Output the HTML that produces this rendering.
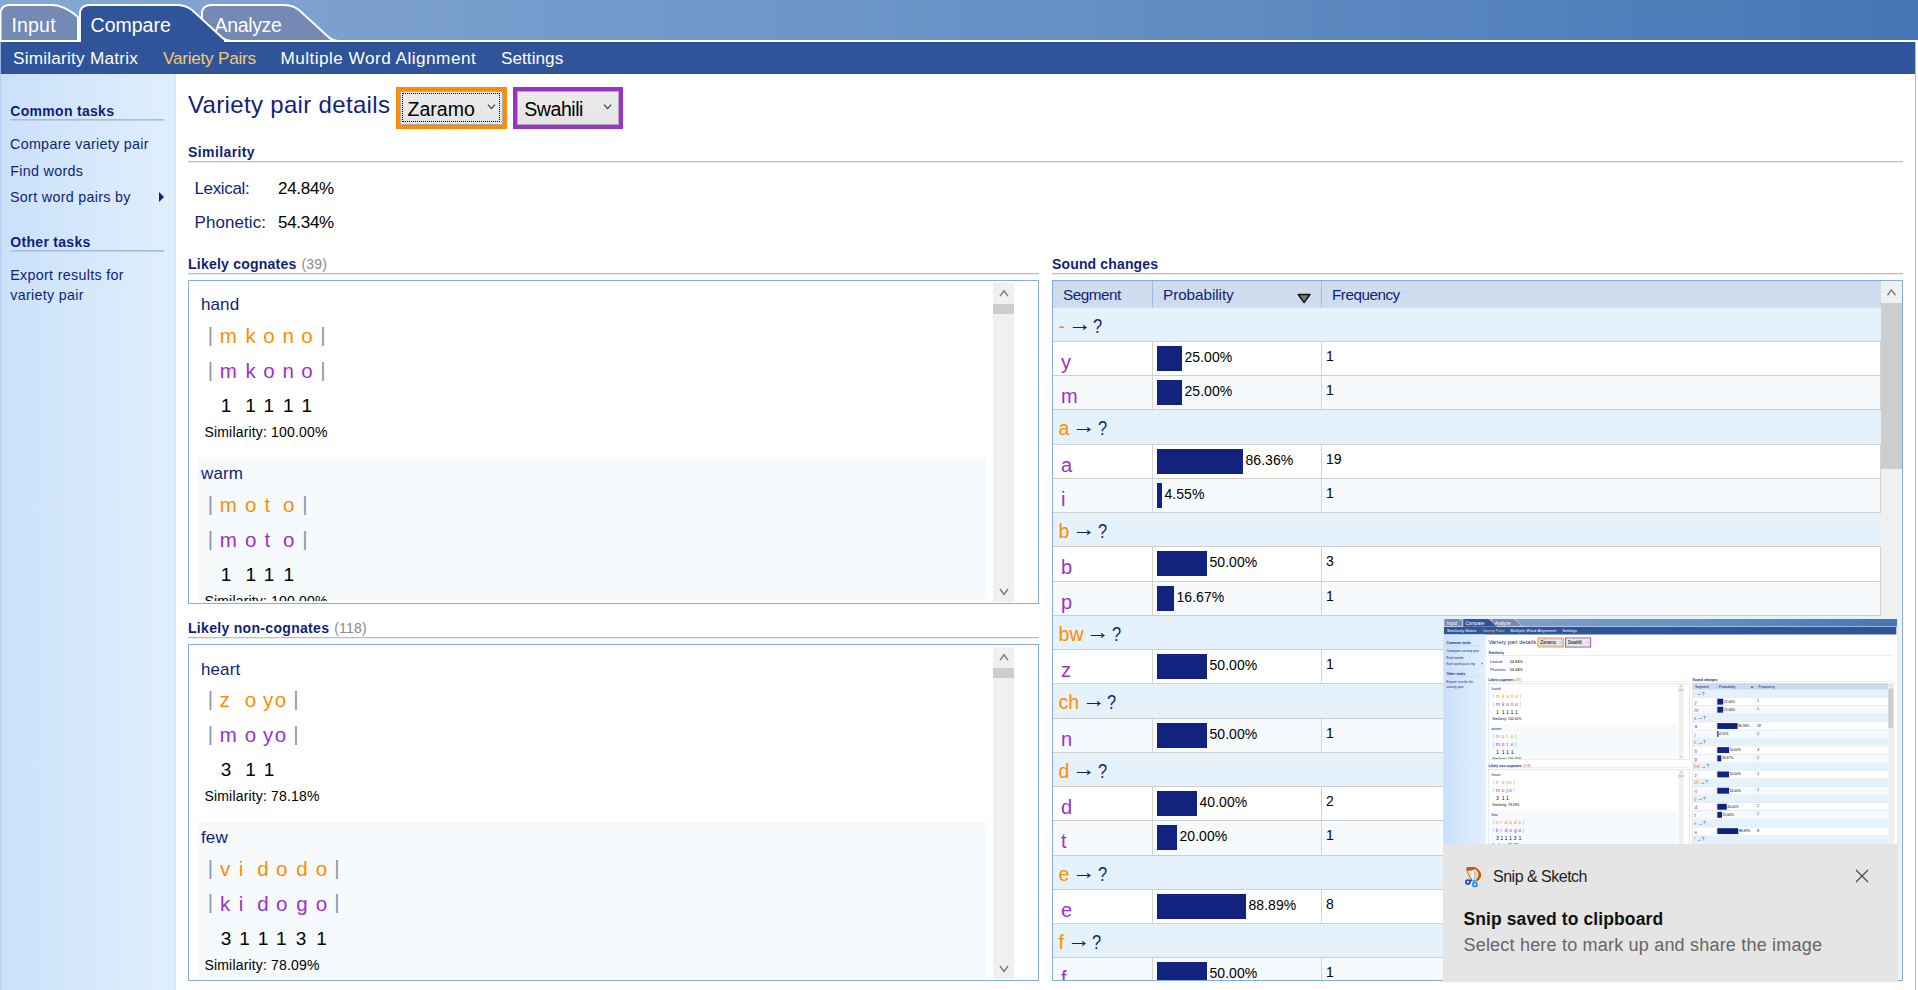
<!DOCTYPE html>
<html lang="en"><head><meta charset="utf-8"><title>Variety pair details</title>
<style>
html,body{margin:0;padding:0;background:#fff;overflow:hidden}
body{width:1918px;height:990px;position:relative;font-family:"Liberation Sans",sans-serif}
.app{position:absolute;left:0;top:0;width:1918px;height:990px;overflow:hidden;background:#fff}
.abs{position:absolute}
.t{position:absolute;white-space:pre}
.c{position:absolute;width:60px;text-align:center;white-space:pre}
.tabbar{position:absolute;left:0;top:0;width:1918px;height:42px;background:linear-gradient(90deg,#85a8d5 0%,#7a9fce 20%,#6690c5 55%,#4576b5 100%)}
.whiteline{position:absolute;left:0;top:40px;width:1918px;height:2px;background:#fff}
.menubar{position:absolute;left:0;top:42px;width:1915px;height:32px;background:#2f5499}
.sidebar{position:absolute;left:0;top:74px;width:174px;height:916px;border-right:2px solid #d3e7fc;background:linear-gradient(90deg,#c4dbf8 0px,#cbe1fa 4px,#e0effd 174px)}
.sideul{position:absolute;left:11px;width:153px;height:2px;background:linear-gradient(180deg,#9bb4e6,#c3d4f3)}
.secul{position:absolute;height:1px;background:#bdbdbd;box-shadow:0 1px 0 #ececec}
.dd{position:absolute;height:42px;box-sizing:border-box;border:4px solid}
.ddin{position:absolute;left:0;top:0;right:0;bottom:0;border:1px solid #adadad;background:linear-gradient(180deg,#ececec,#e4e4e4)}
.focus{position:absolute;left:1px;top:1px;right:2px;bottom:2px;border:1px dotted #000}
.lb{position:absolute;left:188px;width:849px;border:1px solid #86abe6;background:#fff}
.lbclip{position:absolute;left:0;top:0;width:849px;overflow:hidden}
.alt{position:absolute;left:8px;width:790px;height:169px;background:#f6fafd}
.lbtxt{position:absolute;left:0;width:990px;overflow:hidden}
.sb{position:absolute;background:#f0f0f0}
.sbthumb{position:absolute;background:#cdcdcd}
.tb{position:absolute;left:1052px;top:280px;width:849px;height:699px;border:1px solid #86abe6;background:#fff}
.th{position:absolute;left:1053px;top:281px;width:828px;height:26px;background-color:#d0ddef;background-image:radial-gradient(circle,#c9d8f0 0.6px,rgba(201,216,240,0) 1px),radial-gradient(circle,#c9d8f0 0.6px,rgba(201,216,240,0) 1px);background-size:4px 10px,4px 10px;background-position:0 1px,2px 6px}
.arr{display:inline-block;transform:translateY(-2.4px) scale(1.2,1.1);margin-left:-0.7px}
.qm{display:inline-block;transform:scaleX(0.84);transform-origin:0 50%;margin-left:-1.8px}
.tbclip{position:absolute;left:1053px;top:281px;width:828px;height:699px;overflow:hidden}
.toast{position:absolute;left:1443px;top:619px;width:455px;height:363px;background:#e5e5e5}
.thumb{position:absolute;left:1px;top:0;width:453px;height:225px;overflow:hidden;background:#fff}
.thumb .app{transform:scale(0.2362);transform-origin:0 0;top:-1.8px}
.rborder{position:absolute;left:1915px;top:42px;width:1px;height:948px;background:#a9b9e2}
.lborder{position:absolute;left:0;top:42px;width:1px;height:948px;background:#b4c8ee;opacity:.8}
</style></head>
<body>
<div class="app">
<div class="tabbar"></div>
<svg class="abs" style="left:0;top:0" width="400" height="44" viewBox="0 0 400 44">
 <!-- Input tab -->
 <path d="M0.5,41 L0.5,14 Q0.5,5 10,5 L52,5 Q64,5 78,17 L78,41 Z" fill="#7489b4" stroke="#fff" stroke-width="1.9"/>
 <!-- Analyze tab -->
 <path d="M202,41 L202,14 Q202,5 212,5 L283,5 Q293,5 299,10 L329,37.5 Q333,41 338,41 Z" fill="#7489b4" stroke="#fff" stroke-width="1.9"/>
 <!-- Compare tab (active) -->
 <path d="M80,42 L80,14 Q80,5 90,5 L176,5 Q186,5 192,10 L222,37.5 Q226,41 231,41 L231,42 Z" fill="#2f5499" stroke="#fff" stroke-width="1.9"/>
</svg>
<div class="whiteline"></div>
<div class="menubar"></div>
<div class="abs" style="left:81px;top:40px;width:143px;height:3px;background:#2f5499"></div>

<span class="t" style="left:11.40px;top:16.39px;font-size:19.5px;line-height:19.5px;color:#fff;letter-spacing:0.2px">Input</span>
<span class="t" style="left:90.60px;top:16.39px;font-size:19.5px;line-height:19.5px;color:#fff;">Compare</span>
<span class="t" style="left:214.60px;top:16.39px;font-size:19.5px;line-height:19.5px;color:#fff;letter-spacing:-0.37px">Analyze</span>
<span class="t" style="left:13.00px;top:49.54px;font-size:17.2px;line-height:17.2px;color:#fff;letter-spacing:0.22px">Similarity Matrix</span>
<span class="t" style="left:163.00px;top:49.54px;font-size:17.2px;line-height:17.2px;color:#f6c878;letter-spacing:-0.25px">Variety Pairs</span>
<span class="t" style="left:280.40px;top:49.54px;font-size:17.2px;line-height:17.2px;color:#fff;letter-spacing:0.47px">Multiple Word Alignment</span>
<span class="t" style="left:501.00px;top:49.54px;font-size:17.2px;line-height:17.2px;color:#fff;letter-spacing:0.02px">Settings</span>
<div class="sidebar"></div>
<span class="t" style="left:10.30px;top:103.85px;font-size:14px;line-height:14px;color:#111f7a;font-weight:bold;letter-spacing:0.3px">Common tasks</span>
<div class="sideul" style="top:119px"></div>
<span class="t" style="left:10.00px;top:136.50px;font-size:14.3px;line-height:14.3px;color:#111f7a;letter-spacing:0.31px">Compare variety pair</span>
<span class="t" style="left:10.20px;top:163.90px;font-size:14.3px;line-height:14.3px;color:#111f7a;letter-spacing:0.31px">Find words</span>
<span class="t" style="left:10.00px;top:189.60px;font-size:14.3px;line-height:14.3px;color:#111f7a;letter-spacing:0.31px">Sort word pairs by</span>
<svg class="abs" style="left:158px;top:191px" width="8" height="12"><path d="M1,1 L6,6 L1,11 Z" fill="#111f7a"/></svg>
<span class="t" style="left:10.30px;top:234.85px;font-size:14px;line-height:14px;color:#111f7a;font-weight:bold;letter-spacing:0.3px">Other tasks</span>
<div class="sideul" style="top:250px"></div>
<span class="t" style="left:10.20px;top:267.50px;font-size:14.3px;line-height:14.3px;color:#111f7a;letter-spacing:0.31px">Export results for</span>
<span class="t" style="left:10.20px;top:287.50px;font-size:14.3px;line-height:14.3px;color:#111f7a;letter-spacing:0.31px">variety pair</span>
<span class="t" style="left:188.00px;top:93.38px;font-size:24px;line-height:24px;color:#111f7a;letter-spacing:0.33px">Variety pair details</span>
<div class="dd" style="left:396px;top:87px;width:111px;border-color:#ff8c00"><div class="ddin"><div class="focus"></div></div></div>
<div class="dd" style="left:513px;top:87px;width:110px;border-color:#9932cc"><div class="ddin"></div></div>
<span class="t" style="left:407.60px;top:99.89px;font-size:19.5px;line-height:19.5px;color:#000;letter-spacing:0.0px">Zaramo</span>
<span class="t" style="left:524.30px;top:99.89px;font-size:19.5px;line-height:19.5px;color:#000;letter-spacing:-0.45px">Swahili</span>
<svg class="abs" style="left:0;top:0" width="1918" height="990"><polyline points="488.0,104.6 491.5,108.6 495.0,104.6" fill="none" stroke="#444" stroke-width="1.3"/></svg>
<svg class="abs" style="left:0;top:0" width="1918" height="990"><polyline points="604.1,104.6 607.6,108.6 611.1,104.6" fill="none" stroke="#444" stroke-width="1.3"/></svg>
<span class="t" style="left:188.00px;top:144.85px;font-size:14px;line-height:14px;color:#111f7a;font-weight:bold;letter-spacing:0.4px">Similarity</span><div class="secul" style="left:188px;top:161px;width:1715px"></div>
<span class="t" style="left:188.00px;top:256.95px;font-size:14px;line-height:14px;color:#111f7a;font-weight:bold;letter-spacing:0.23px">Likely cognates<span style="font-weight:normal;color:#8a8a8a;letter-spacing:0.2px;margin-left:5px">(39)</span></span><div class="secul" style="left:188px;top:273px;width:851px"></div>
<span class="t" style="left:188.00px;top:620.95px;font-size:14px;line-height:14px;color:#111f7a;font-weight:bold;letter-spacing:0.31px">Likely non-cognates<span style="font-weight:normal;color:#8a8a8a;letter-spacing:0.2px;margin-left:5px">(118)</span></span><div class="secul" style="left:188px;top:637px;width:851px"></div>
<span class="t" style="left:1052.00px;top:256.95px;font-size:14px;line-height:14px;color:#111f7a;font-weight:bold;letter-spacing:0.15px">Sound changes</span><div class="secul" style="left:1052px;top:273px;width:851px"></div>
<span class="t" style="left:194.50px;top:179.71px;font-size:17px;line-height:17px;color:#111f7a;letter-spacing:-0.35px">Lexical:</span>
<span class="t" style="left:278.00px;top:179.71px;font-size:17px;line-height:17px;color:#000;letter-spacing:-0.3px">24.84%</span>
<span class="t" style="left:194.50px;top:214.41px;font-size:17px;line-height:17px;color:#111f7a;letter-spacing:0.07px">Phonetic:</span>
<span class="t" style="left:278.00px;top:214.41px;font-size:17px;line-height:17px;color:#000;letter-spacing:-0.3px">54.34%</span>
<div class="lb" style="top:280px;height:322px">
<div class="lbclip" style="height:321px">
<div class="alt" style="top:176px"></div>
</div>
</div>
<div class="lbtxt" style="top:281px;height:320px"><div style="position:absolute;left:0;top:-281px">
<span class="t" style="left:201.00px;top:296.11px;font-size:17px;line-height:17px;color:#111f7a;letter-spacing:0.1px">hand</span>
<span class="c" style="left:180.40px;top:324.73px;font-size:20.4px;line-height:20.4px;color:#8a93b5;">|</span>
<span class="c" style="left:198.40px;top:326.05px;font-size:20.5px;line-height:20.5px;color:#ff8c00;">m</span>
<span class="c" style="left:220.50px;top:326.05px;font-size:20.5px;line-height:20.5px;color:#ff8c00;">k</span>
<span class="c" style="left:238.90px;top:326.05px;font-size:20.5px;line-height:20.5px;color:#ff8c00;">o</span>
<span class="c" style="left:258.30px;top:326.05px;font-size:20.5px;line-height:20.5px;color:#ff8c00;">n</span>
<span class="c" style="left:276.90px;top:326.05px;font-size:20.5px;line-height:20.5px;color:#ff8c00;">o</span>
<span class="c" style="left:293.00px;top:324.73px;font-size:20.4px;line-height:20.4px;color:#8a93b5;">|</span>
<span class="c" style="left:180.40px;top:359.53px;font-size:20.4px;line-height:20.4px;color:#8a93b5;">|</span>
<span class="c" style="left:198.40px;top:360.85px;font-size:20.5px;line-height:20.5px;color:#9932cc;">m</span>
<span class="c" style="left:220.50px;top:360.85px;font-size:20.5px;line-height:20.5px;color:#9932cc;">k</span>
<span class="c" style="left:238.90px;top:360.85px;font-size:20.5px;line-height:20.5px;color:#9932cc;">o</span>
<span class="c" style="left:258.30px;top:360.85px;font-size:20.5px;line-height:20.5px;color:#9932cc;">n</span>
<span class="c" style="left:276.90px;top:360.85px;font-size:20.5px;line-height:20.5px;color:#9932cc;">o</span>
<span class="c" style="left:293.00px;top:359.53px;font-size:20.4px;line-height:20.4px;color:#8a93b5;">|</span>
<span class="c" style="left:196.00px;top:395.82px;font-size:19px;line-height:19px;color:#000;">1</span>
<span class="c" style="left:220.50px;top:395.82px;font-size:19px;line-height:19px;color:#000;">1</span>
<span class="c" style="left:238.90px;top:395.82px;font-size:19px;line-height:19px;color:#000;">1</span>
<span class="c" style="left:258.30px;top:395.82px;font-size:19px;line-height:19px;color:#000;">1</span>
<span class="c" style="left:276.90px;top:395.82px;font-size:19px;line-height:19px;color:#000;">1</span>
<span class="t" style="left:204.50px;top:425.05px;font-size:14px;line-height:14px;color:#000;letter-spacing:0.17px">Similarity: 100.00%</span>
<span class="t" style="left:201.00px;top:465.11px;font-size:17px;line-height:17px;color:#111f7a;letter-spacing:0.1px">warm</span>
<span class="c" style="left:180.40px;top:493.73px;font-size:20.4px;line-height:20.4px;color:#8a93b5;">|</span>
<span class="c" style="left:198.40px;top:495.05px;font-size:20.5px;line-height:20.5px;color:#ff8c00;">m</span>
<span class="c" style="left:220.70px;top:495.05px;font-size:20.5px;line-height:20.5px;color:#ff8c00;">o</span>
<span class="c" style="left:237.40px;top:495.05px;font-size:20.5px;line-height:20.5px;color:#ff8c00;">t</span>
<span class="c" style="left:258.70px;top:495.05px;font-size:20.5px;line-height:20.5px;color:#ff8c00;">o</span>
<span class="c" style="left:274.80px;top:493.73px;font-size:20.4px;line-height:20.4px;color:#8a93b5;">|</span>
<span class="c" style="left:180.40px;top:528.53px;font-size:20.4px;line-height:20.4px;color:#8a93b5;">|</span>
<span class="c" style="left:198.40px;top:529.85px;font-size:20.5px;line-height:20.5px;color:#9932cc;">m</span>
<span class="c" style="left:220.70px;top:529.85px;font-size:20.5px;line-height:20.5px;color:#9932cc;">o</span>
<span class="c" style="left:237.40px;top:529.85px;font-size:20.5px;line-height:20.5px;color:#9932cc;">t</span>
<span class="c" style="left:258.70px;top:529.85px;font-size:20.5px;line-height:20.5px;color:#9932cc;">o</span>
<span class="c" style="left:274.80px;top:528.53px;font-size:20.4px;line-height:20.4px;color:#8a93b5;">|</span>
<span class="c" style="left:196.00px;top:564.82px;font-size:19px;line-height:19px;color:#000;">1</span>
<span class="c" style="left:220.70px;top:564.82px;font-size:19px;line-height:19px;color:#000;">1</span>
<span class="c" style="left:239.00px;top:564.82px;font-size:19px;line-height:19px;color:#000;">1</span>
<span class="c" style="left:258.70px;top:564.82px;font-size:19px;line-height:19px;color:#000;">1</span>
<span class="t" style="left:204.50px;top:594.05px;font-size:14px;line-height:14px;color:#000;letter-spacing:0.17px">Similarity: 100.00%</span>
</div></div>
<div class="sb" style="left:993px;top:283px;width:21px;height:319px"></div>
<div class="sbthumb" style="left:993px;top:304px;width:21px;height:10px"></div>
<svg class="abs" style="left:0;top:0" width="1918" height="990"><polyline points="1000.0,296.09999999999997 1004,290.7 1008.0,296.09999999999997" fill="none" stroke="#7a7f7a" stroke-width="1.5"/></svg>
<svg class="abs" style="left:0;top:0" width="1918" height="990"><polyline points="1000.0,589.0 1004,594.4000000000001 1008.0,589.0" fill="none" stroke="#7a7f7a" stroke-width="1.5"/></svg>
<div class="lb" style="top:644px;height:335px">
<div class="lbclip" style="height:332px">
<div class="alt" style="top:176.5px"></div>
</div>
</div>
<div class="lbtxt" style="top:645px;height:333px"><div style="position:absolute;left:0;top:-645px">
<span class="t" style="left:201.00px;top:660.51px;font-size:17px;line-height:17px;color:#111f7a;letter-spacing:0.1px">heart</span>
<span class="c" style="left:180.40px;top:689.13px;font-size:20.4px;line-height:20.4px;color:#8a93b5;">|</span>
<span class="c" style="left:194.50px;top:690.45px;font-size:20.5px;line-height:20.5px;color:#ff8c00;">z</span>
<span class="c" style="left:220.50px;top:690.45px;font-size:20.5px;line-height:20.5px;color:#ff8c00;">o</span>
<span class="c" style="left:238.00px;top:690.45px;font-size:20.5px;line-height:20.5px;color:#ff8c00;">y</span>
<span class="c" style="left:250.50px;top:690.45px;font-size:20.5px;line-height:20.5px;color:#ff8c00;">o</span>
<span class="c" style="left:266.00px;top:689.13px;font-size:20.4px;line-height:20.4px;color:#8a93b5;">|</span>
<span class="c" style="left:180.40px;top:723.93px;font-size:20.4px;line-height:20.4px;color:#8a93b5;">|</span>
<span class="c" style="left:198.40px;top:725.25px;font-size:20.5px;line-height:20.5px;color:#9932cc;">m</span>
<span class="c" style="left:220.50px;top:725.25px;font-size:20.5px;line-height:20.5px;color:#9932cc;">o</span>
<span class="c" style="left:238.00px;top:725.25px;font-size:20.5px;line-height:20.5px;color:#9932cc;">y</span>
<span class="c" style="left:250.50px;top:725.25px;font-size:20.5px;line-height:20.5px;color:#9932cc;">o</span>
<span class="c" style="left:266.00px;top:723.93px;font-size:20.4px;line-height:20.4px;color:#8a93b5;">|</span>
<span class="c" style="left:196.00px;top:760.22px;font-size:19px;line-height:19px;color:#000;">3</span>
<span class="c" style="left:220.50px;top:760.22px;font-size:19px;line-height:19px;color:#000;">1</span>
<span class="c" style="left:239.00px;top:760.22px;font-size:19px;line-height:19px;color:#000;">1</span>
<span class="t" style="left:204.50px;top:789.45px;font-size:14px;line-height:14px;color:#000;letter-spacing:0.17px">Similarity: 78.18%</span>
<span class="t" style="left:201.00px;top:829.01px;font-size:17px;line-height:17px;color:#111f7a;letter-spacing:0.1px">few</span>
<span class="c" style="left:180.40px;top:857.63px;font-size:20.4px;line-height:20.4px;color:#8a93b5;">|</span>
<span class="c" style="left:195.00px;top:858.95px;font-size:20.5px;line-height:20.5px;color:#ff8c00;">v</span>
<span class="c" style="left:211.00px;top:858.95px;font-size:20.5px;line-height:20.5px;color:#ff8c00;">i</span>
<span class="c" style="left:233.00px;top:858.95px;font-size:20.5px;line-height:20.5px;color:#ff8c00;">d</span>
<span class="c" style="left:251.80px;top:858.95px;font-size:20.5px;line-height:20.5px;color:#ff8c00;">o</span>
<span class="c" style="left:272.00px;top:858.95px;font-size:20.5px;line-height:20.5px;color:#ff8c00;">d</span>
<span class="c" style="left:291.50px;top:858.95px;font-size:20.5px;line-height:20.5px;color:#ff8c00;">o</span>
<span class="c" style="left:307.00px;top:857.63px;font-size:20.4px;line-height:20.4px;color:#8a93b5;">|</span>
<span class="c" style="left:180.40px;top:892.43px;font-size:20.4px;line-height:20.4px;color:#8a93b5;">|</span>
<span class="c" style="left:195.00px;top:893.75px;font-size:20.5px;line-height:20.5px;color:#9932cc;">k</span>
<span class="c" style="left:211.00px;top:893.75px;font-size:20.5px;line-height:20.5px;color:#9932cc;">i</span>
<span class="c" style="left:233.00px;top:893.75px;font-size:20.5px;line-height:20.5px;color:#9932cc;">d</span>
<span class="c" style="left:251.80px;top:893.75px;font-size:20.5px;line-height:20.5px;color:#9932cc;">o</span>
<span class="c" style="left:272.00px;top:893.75px;font-size:20.5px;line-height:20.5px;color:#9932cc;">g</span>
<span class="c" style="left:291.50px;top:893.75px;font-size:20.5px;line-height:20.5px;color:#9932cc;">o</span>
<span class="c" style="left:307.00px;top:892.43px;font-size:20.4px;line-height:20.4px;color:#8a93b5;">|</span>
<span class="c" style="left:196.00px;top:928.72px;font-size:19px;line-height:19px;color:#000;">3</span>
<span class="c" style="left:214.60px;top:928.72px;font-size:19px;line-height:19px;color:#000;">1</span>
<span class="c" style="left:233.00px;top:928.72px;font-size:19px;line-height:19px;color:#000;">1</span>
<span class="c" style="left:251.40px;top:928.72px;font-size:19px;line-height:19px;color:#000;">1</span>
<span class="c" style="left:271.00px;top:928.72px;font-size:19px;line-height:19px;color:#000;">3</span>
<span class="c" style="left:291.50px;top:928.72px;font-size:19px;line-height:19px;color:#000;">1</span>
<span class="t" style="left:204.50px;top:957.95px;font-size:14px;line-height:14px;color:#000;letter-spacing:0.17px">Similarity: 78.09%</span>
</div></div>
<div class="sb" style="left:993px;top:647px;width:21px;height:332px"></div>
<div class="sbthumb" style="left:993px;top:668px;width:21px;height:10px"></div>
<svg class="abs" style="left:0;top:0" width="1918" height="990"><polyline points="1000.0,660.1 1004,654.6999999999999 1008.0,660.1" fill="none" stroke="#7a7f7a" stroke-width="1.5"/></svg>
<svg class="abs" style="left:0;top:0" width="1918" height="990"><polyline points="1000.0,966.0 1004,971.4000000000001 1008.0,966.0" fill="none" stroke="#7a7f7a" stroke-width="1.5"/></svg>
<div class="tb"></div>
<div class="th"></div>
<div class="abs" style="left:1152px;top:281px;width:1px;height:26px;background:#9db9e6"></div>
<div class="abs" style="left:1321px;top:281px;width:1px;height:26px;background:#9db9e6"></div>
<span class="t" style="left:1063.00px;top:287.05px;font-size:15.3px;line-height:15.3px;color:#111f7a;letter-spacing:-0.5px">Segment</span>
<span class="t" style="left:1163.00px;top:287.05px;font-size:15.3px;line-height:15.3px;color:#111f7a;letter-spacing:-0.07px">Probability</span>
<span class="t" style="left:1332.00px;top:287.05px;font-size:15.3px;line-height:15.3px;color:#111f7a;letter-spacing:-0.5px">Frequency</span>
<svg class="abs" style="left:1297px;top:293px" width="15" height="11"><path d="M1.2,1.5 L13,1.5 L7.1,9.6 Z" fill="#777" stroke="#111" stroke-width="1.4" stroke-linejoin="round"/></svg>
<div class="tbclip"><div style="position:absolute;left:-1053px;top:-281px;width:1918px;height:990px">
<div class="abs" style="left:1053px;top:308px;width:828px;height:34px;background:#e5f1fb"></div>
<span class="t" style="left:1058.50px;top:316.89px;font-size:19.5px;line-height:19.5px;color:#111f7a;letter-spacing:0.1px"><span style="color:#ff8c00">-</span> <span class="arr">→</span> <span class="qm">?</span></span>
<div class="abs" style="left:1053px;top:342px;width:828px;height:33px;background:#fff"></div>
<div class="abs" style="left:1053px;top:341px;width:828px;height:1px;background:#cfcfcf"></div>
<div class="abs" style="left:1053px;top:375px;width:828px;height:1px;background:#cfcfcf"></div>
<div class="abs" style="left:1152px;top:342px;width:1px;height:33px;background:#d4d4d4"></div>
<div class="abs" style="left:1321px;top:342px;width:1px;height:33px;background:#d4d4d4"></div>
<div class="abs" style="left:1880px;top:342px;width:1px;height:33px;background:#d4d4d4"></div>
<span class="t" style="left:1061.00px;top:351.57px;font-size:20px;line-height:20px;color:#9932cc;">y</span>
<div class="abs" style="left:1157px;top:346px;width:25px;height:25px;background:#11227f"></div>
<span class="t" style="left:1184.50px;top:350.15px;font-size:14px;line-height:14px;color:#000;letter-spacing:0.05px">25.00%</span>
<span class="t" style="left:1326.00px;top:348.65px;font-size:14px;line-height:14px;color:#000;">1</span>
<div class="abs" style="left:1053px;top:376px;width:828px;height:33px;background:#f6fafd"></div>
<div class="abs" style="left:1053px;top:375px;width:828px;height:1px;background:#cfcfcf"></div>
<div class="abs" style="left:1053px;top:409px;width:828px;height:1px;background:#cfcfcf"></div>
<div class="abs" style="left:1152px;top:376px;width:1px;height:33px;background:#d4d4d4"></div>
<div class="abs" style="left:1321px;top:376px;width:1px;height:33px;background:#d4d4d4"></div>
<div class="abs" style="left:1880px;top:376px;width:1px;height:33px;background:#d4d4d4"></div>
<span class="t" style="left:1061.00px;top:385.57px;font-size:20px;line-height:20px;color:#9932cc;">m</span>
<div class="abs" style="left:1157px;top:380px;width:25px;height:25px;background:#11227f"></div>
<span class="t" style="left:1184.50px;top:384.15px;font-size:14px;line-height:14px;color:#000;letter-spacing:0.05px">25.00%</span>
<span class="t" style="left:1326.00px;top:382.65px;font-size:14px;line-height:14px;color:#000;">1</span>
<div class="abs" style="left:1053px;top:410px;width:828px;height:35px;background:#e5f1fb"></div>
<span class="t" style="left:1058.50px;top:418.89px;font-size:19.5px;line-height:19.5px;color:#111f7a;letter-spacing:0.1px"><span style="color:#ff8c00">a</span> <span class="arr">→</span> <span class="qm">?</span></span>
<div class="abs" style="left:1053px;top:445px;width:828px;height:33px;background:#fff"></div>
<div class="abs" style="left:1053px;top:444px;width:828px;height:1px;background:#cfcfcf"></div>
<div class="abs" style="left:1053px;top:478px;width:828px;height:1px;background:#cfcfcf"></div>
<div class="abs" style="left:1152px;top:445px;width:1px;height:33px;background:#d4d4d4"></div>
<div class="abs" style="left:1321px;top:445px;width:1px;height:33px;background:#d4d4d4"></div>
<div class="abs" style="left:1880px;top:445px;width:1px;height:33px;background:#d4d4d4"></div>
<span class="t" style="left:1061.00px;top:454.57px;font-size:20px;line-height:20px;color:#9932cc;">a</span>
<div class="abs" style="left:1157px;top:449px;width:86px;height:25px;background:#11227f"></div>
<span class="t" style="left:1245.50px;top:453.15px;font-size:14px;line-height:14px;color:#000;letter-spacing:0.05px">86.36%</span>
<span class="t" style="left:1326.00px;top:451.65px;font-size:14px;line-height:14px;color:#000;">19</span>
<div class="abs" style="left:1053px;top:479px;width:828px;height:33px;background:#f6fafd"></div>
<div class="abs" style="left:1053px;top:478px;width:828px;height:1px;background:#cfcfcf"></div>
<div class="abs" style="left:1053px;top:512px;width:828px;height:1px;background:#cfcfcf"></div>
<div class="abs" style="left:1152px;top:479px;width:1px;height:33px;background:#d4d4d4"></div>
<div class="abs" style="left:1321px;top:479px;width:1px;height:33px;background:#d4d4d4"></div>
<div class="abs" style="left:1880px;top:479px;width:1px;height:33px;background:#d4d4d4"></div>
<span class="t" style="left:1061.00px;top:488.57px;font-size:20px;line-height:20px;color:#9932cc;">i</span>
<div class="abs" style="left:1157px;top:483px;width:5px;height:25px;background:#11227f"></div>
<span class="t" style="left:1164.50px;top:487.15px;font-size:14px;line-height:14px;color:#000;letter-spacing:0.05px">4.55%</span>
<span class="t" style="left:1326.00px;top:485.65px;font-size:14px;line-height:14px;color:#000;">1</span>
<div class="abs" style="left:1053px;top:513px;width:828px;height:34px;background:#e5f1fb"></div>
<span class="t" style="left:1058.50px;top:521.89px;font-size:19.5px;line-height:19.5px;color:#111f7a;letter-spacing:0.1px"><span style="color:#ff8c00">b</span> <span class="arr">→</span> <span class="qm">?</span></span>
<div class="abs" style="left:1053px;top:547px;width:828px;height:34px;background:#fff"></div>
<div class="abs" style="left:1053px;top:546px;width:828px;height:1px;background:#cfcfcf"></div>
<div class="abs" style="left:1053px;top:581px;width:828px;height:1px;background:#cfcfcf"></div>
<div class="abs" style="left:1152px;top:547px;width:1px;height:34px;background:#d4d4d4"></div>
<div class="abs" style="left:1321px;top:547px;width:1px;height:34px;background:#d4d4d4"></div>
<div class="abs" style="left:1880px;top:547px;width:1px;height:34px;background:#d4d4d4"></div>
<span class="t" style="left:1061.00px;top:556.57px;font-size:20px;line-height:20px;color:#9932cc;">b</span>
<div class="abs" style="left:1157px;top:551px;width:50px;height:25px;background:#11227f"></div>
<span class="t" style="left:1209.50px;top:555.15px;font-size:14px;line-height:14px;color:#000;letter-spacing:0.05px">50.00%</span>
<span class="t" style="left:1326.00px;top:553.65px;font-size:14px;line-height:14px;color:#000;">3</span>
<div class="abs" style="left:1053px;top:582px;width:828px;height:33px;background:#f6fafd"></div>
<div class="abs" style="left:1053px;top:581px;width:828px;height:1px;background:#cfcfcf"></div>
<div class="abs" style="left:1053px;top:615px;width:828px;height:1px;background:#cfcfcf"></div>
<div class="abs" style="left:1152px;top:582px;width:1px;height:33px;background:#d4d4d4"></div>
<div class="abs" style="left:1321px;top:582px;width:1px;height:33px;background:#d4d4d4"></div>
<div class="abs" style="left:1880px;top:582px;width:1px;height:33px;background:#d4d4d4"></div>
<span class="t" style="left:1061.00px;top:591.57px;font-size:20px;line-height:20px;color:#9932cc;">p</span>
<div class="abs" style="left:1157px;top:586px;width:17px;height:25px;background:#11227f"></div>
<span class="t" style="left:1176.50px;top:590.15px;font-size:14px;line-height:14px;color:#000;letter-spacing:0.05px">16.67%</span>
<span class="t" style="left:1326.00px;top:588.65px;font-size:14px;line-height:14px;color:#000;">1</span>
<div class="abs" style="left:1053px;top:616px;width:828px;height:34px;background:#e5f1fb"></div>
<span class="t" style="left:1058.50px;top:624.89px;font-size:19.5px;line-height:19.5px;color:#111f7a;letter-spacing:0.1px"><span style="color:#ff8c00">bw</span> <span class="arr">→</span> <span class="qm">?</span></span>
<div class="abs" style="left:1053px;top:650px;width:828px;height:33px;background:#fff"></div>
<div class="abs" style="left:1053px;top:649px;width:828px;height:1px;background:#cfcfcf"></div>
<div class="abs" style="left:1053px;top:683px;width:828px;height:1px;background:#cfcfcf"></div>
<div class="abs" style="left:1152px;top:650px;width:1px;height:33px;background:#d4d4d4"></div>
<div class="abs" style="left:1321px;top:650px;width:1px;height:33px;background:#d4d4d4"></div>
<div class="abs" style="left:1880px;top:650px;width:1px;height:33px;background:#d4d4d4"></div>
<span class="t" style="left:1061.00px;top:659.57px;font-size:20px;line-height:20px;color:#9932cc;">z</span>
<div class="abs" style="left:1157px;top:654px;width:50px;height:25px;background:#11227f"></div>
<span class="t" style="left:1209.50px;top:658.15px;font-size:14px;line-height:14px;color:#000;letter-spacing:0.05px">50.00%</span>
<span class="t" style="left:1326.00px;top:656.65px;font-size:14px;line-height:14px;color:#000;">1</span>
<div class="abs" style="left:1053px;top:684px;width:828px;height:35px;background:#e5f1fb"></div>
<span class="t" style="left:1058.50px;top:692.89px;font-size:19.5px;line-height:19.5px;color:#111f7a;letter-spacing:0.1px"><span style="color:#ff8c00">ch</span> <span class="arr">→</span> <span class="qm">?</span></span>
<div class="abs" style="left:1053px;top:719px;width:828px;height:33px;background:#f6fafd"></div>
<div class="abs" style="left:1053px;top:718px;width:828px;height:1px;background:#cfcfcf"></div>
<div class="abs" style="left:1053px;top:752px;width:828px;height:1px;background:#cfcfcf"></div>
<div class="abs" style="left:1152px;top:719px;width:1px;height:33px;background:#d4d4d4"></div>
<div class="abs" style="left:1321px;top:719px;width:1px;height:33px;background:#d4d4d4"></div>
<div class="abs" style="left:1880px;top:719px;width:1px;height:33px;background:#d4d4d4"></div>
<span class="t" style="left:1061.00px;top:728.57px;font-size:20px;line-height:20px;color:#9932cc;">n</span>
<div class="abs" style="left:1157px;top:723px;width:50px;height:25px;background:#11227f"></div>
<span class="t" style="left:1209.50px;top:727.15px;font-size:14px;line-height:14px;color:#000;letter-spacing:0.05px">50.00%</span>
<span class="t" style="left:1326.00px;top:725.65px;font-size:14px;line-height:14px;color:#000;">1</span>
<div class="abs" style="left:1053px;top:753px;width:828px;height:34px;background:#e5f1fb"></div>
<span class="t" style="left:1058.50px;top:761.89px;font-size:19.5px;line-height:19.5px;color:#111f7a;letter-spacing:0.1px"><span style="color:#ff8c00">d</span> <span class="arr">→</span> <span class="qm">?</span></span>
<div class="abs" style="left:1053px;top:787px;width:828px;height:33px;background:#fff"></div>
<div class="abs" style="left:1053px;top:786px;width:828px;height:1px;background:#cfcfcf"></div>
<div class="abs" style="left:1053px;top:820px;width:828px;height:1px;background:#cfcfcf"></div>
<div class="abs" style="left:1152px;top:787px;width:1px;height:33px;background:#d4d4d4"></div>
<div class="abs" style="left:1321px;top:787px;width:1px;height:33px;background:#d4d4d4"></div>
<div class="abs" style="left:1880px;top:787px;width:1px;height:33px;background:#d4d4d4"></div>
<span class="t" style="left:1061.00px;top:796.57px;font-size:20px;line-height:20px;color:#9932cc;">d</span>
<div class="abs" style="left:1157px;top:791px;width:40px;height:25px;background:#11227f"></div>
<span class="t" style="left:1199.50px;top:795.15px;font-size:14px;line-height:14px;color:#000;letter-spacing:0.05px">40.00%</span>
<span class="t" style="left:1326.00px;top:793.65px;font-size:14px;line-height:14px;color:#000;">2</span>
<div class="abs" style="left:1053px;top:821px;width:828px;height:34px;background:#f6fafd"></div>
<div class="abs" style="left:1053px;top:820px;width:828px;height:1px;background:#cfcfcf"></div>
<div class="abs" style="left:1053px;top:855px;width:828px;height:1px;background:#cfcfcf"></div>
<div class="abs" style="left:1152px;top:821px;width:1px;height:34px;background:#d4d4d4"></div>
<div class="abs" style="left:1321px;top:821px;width:1px;height:34px;background:#d4d4d4"></div>
<div class="abs" style="left:1880px;top:821px;width:1px;height:34px;background:#d4d4d4"></div>
<span class="t" style="left:1061.00px;top:830.57px;font-size:20px;line-height:20px;color:#9932cc;">t</span>
<div class="abs" style="left:1157px;top:825px;width:20px;height:25px;background:#11227f"></div>
<span class="t" style="left:1179.50px;top:829.15px;font-size:14px;line-height:14px;color:#000;letter-spacing:0.05px">20.00%</span>
<span class="t" style="left:1326.00px;top:827.65px;font-size:14px;line-height:14px;color:#000;">1</span>
<div class="abs" style="left:1053px;top:856px;width:828px;height:34px;background:#e5f1fb"></div>
<span class="t" style="left:1058.50px;top:864.89px;font-size:19.5px;line-height:19.5px;color:#111f7a;letter-spacing:0.1px"><span style="color:#ff8c00">e</span> <span class="arr">→</span> <span class="qm">?</span></span>
<div class="abs" style="left:1053px;top:890px;width:828px;height:33px;background:#fff"></div>
<div class="abs" style="left:1053px;top:889px;width:828px;height:1px;background:#cfcfcf"></div>
<div class="abs" style="left:1053px;top:923px;width:828px;height:1px;background:#cfcfcf"></div>
<div class="abs" style="left:1152px;top:890px;width:1px;height:33px;background:#d4d4d4"></div>
<div class="abs" style="left:1321px;top:890px;width:1px;height:33px;background:#d4d4d4"></div>
<div class="abs" style="left:1880px;top:890px;width:1px;height:33px;background:#d4d4d4"></div>
<span class="t" style="left:1061.00px;top:899.57px;font-size:20px;line-height:20px;color:#9932cc;">e</span>
<div class="abs" style="left:1157px;top:894px;width:89px;height:25px;background:#11227f"></div>
<span class="t" style="left:1248.50px;top:898.15px;font-size:14px;line-height:14px;color:#000;letter-spacing:0.05px">88.89%</span>
<span class="t" style="left:1326.00px;top:896.65px;font-size:14px;line-height:14px;color:#000;">8</span>
<div class="abs" style="left:1053px;top:924px;width:828px;height:34px;background:#e5f1fb"></div>
<span class="t" style="left:1058.50px;top:932.89px;font-size:19.5px;line-height:19.5px;color:#111f7a;letter-spacing:0.1px"><span style="color:#ff8c00">f</span> <span class="arr">→</span> <span class="qm">?</span></span>
<div class="abs" style="left:1053px;top:958px;width:828px;height:34px;background:#f6fafd"></div>
<div class="abs" style="left:1053px;top:957px;width:828px;height:1px;background:#cfcfcf"></div>
<div class="abs" style="left:1053px;top:992px;width:828px;height:1px;background:#cfcfcf"></div>
<div class="abs" style="left:1152px;top:958px;width:1px;height:34px;background:#d4d4d4"></div>
<div class="abs" style="left:1321px;top:958px;width:1px;height:34px;background:#d4d4d4"></div>
<div class="abs" style="left:1880px;top:958px;width:1px;height:34px;background:#d4d4d4"></div>
<span class="t" style="left:1061.00px;top:967.57px;font-size:20px;line-height:20px;color:#9932cc;">f</span>
<div class="abs" style="left:1157px;top:962px;width:50px;height:25px;background:#11227f"></div>
<span class="t" style="left:1209.50px;top:966.15px;font-size:14px;line-height:14px;color:#000;letter-spacing:0.05px">50.00%</span>
<span class="t" style="left:1326.00px;top:964.65px;font-size:14px;line-height:14px;color:#000;">1</span>
</div></div>
<div class="abs" style="left:1053px;top:307px;width:828px;height:1px;background:#d3e0f1"></div>
<div class="sb" style="left:1881px;top:281px;width:21px;height:699px"></div>
<div class="sbthumb" style="left:1881px;top:303px;width:21px;height:166px"></div>
<svg class="abs" style="left:0;top:0" width="1918" height="990"><polyline points="1887.5,295.3 1891.5,289.90000000000003 1895.5,295.3" fill="none" stroke="#7a7f7a" stroke-width="1.5"/></svg>
<div class="rborder"></div><div class="lborder"></div>
</div>
<div class="toast">
<div class="thumb"><div class="app"><div class="tabbar"></div>
<svg class="abs" style="left:0;top:0" width="400" height="44" viewBox="0 0 400 44">
 <!-- Input tab -->
 <path d="M0.5,41 L0.5,14 Q0.5,5 10,5 L52,5 Q64,5 78,17 L78,41 Z" fill="#7489b4" stroke="#fff" stroke-width="1.9"/>
 <!-- Analyze tab -->
 <path d="M202,41 L202,14 Q202,5 212,5 L283,5 Q293,5 299,10 L329,37.5 Q333,41 338,41 Z" fill="#7489b4" stroke="#fff" stroke-width="1.9"/>
 <!-- Compare tab (active) -->
 <path d="M80,42 L80,14 Q80,5 90,5 L176,5 Q186,5 192,10 L222,37.5 Q226,41 231,41 L231,42 Z" fill="#2f5499" stroke="#fff" stroke-width="1.9"/>
</svg>
<div class="whiteline"></div>
<div class="menubar"></div>
<div class="abs" style="left:81px;top:40px;width:143px;height:3px;background:#2f5499"></div>

<span class="t" style="left:11.40px;top:16.39px;font-size:19.5px;line-height:19.5px;color:#fff;letter-spacing:0.2px">Input</span>
<span class="t" style="left:90.60px;top:16.39px;font-size:19.5px;line-height:19.5px;color:#fff;">Compare</span>
<span class="t" style="left:214.60px;top:16.39px;font-size:19.5px;line-height:19.5px;color:#fff;letter-spacing:-0.37px">Analyze</span>
<span class="t" style="left:13.00px;top:49.54px;font-size:17.2px;line-height:17.2px;color:#fff;letter-spacing:0.22px">Similarity Matrix</span>
<span class="t" style="left:163.00px;top:49.54px;font-size:17.2px;line-height:17.2px;color:#f6c878;letter-spacing:-0.25px">Variety Pairs</span>
<span class="t" style="left:280.40px;top:49.54px;font-size:17.2px;line-height:17.2px;color:#fff;letter-spacing:0.47px">Multiple Word Alignment</span>
<span class="t" style="left:501.00px;top:49.54px;font-size:17.2px;line-height:17.2px;color:#fff;letter-spacing:0.02px">Settings</span>
<div class="sidebar"></div>
<span class="t" style="left:10.30px;top:103.85px;font-size:14px;line-height:14px;color:#111f7a;font-weight:bold;letter-spacing:0.3px">Common tasks</span>
<div class="sideul" style="top:119px"></div>
<span class="t" style="left:10.00px;top:136.50px;font-size:14.3px;line-height:14.3px;color:#111f7a;letter-spacing:0.31px">Compare variety pair</span>
<span class="t" style="left:10.20px;top:163.90px;font-size:14.3px;line-height:14.3px;color:#111f7a;letter-spacing:0.31px">Find words</span>
<span class="t" style="left:10.00px;top:189.60px;font-size:14.3px;line-height:14.3px;color:#111f7a;letter-spacing:0.31px">Sort word pairs by</span>
<svg class="abs" style="left:158px;top:191px" width="8" height="12"><path d="M1,1 L6,6 L1,11 Z" fill="#111f7a"/></svg>
<span class="t" style="left:10.30px;top:234.85px;font-size:14px;line-height:14px;color:#111f7a;font-weight:bold;letter-spacing:0.3px">Other tasks</span>
<div class="sideul" style="top:250px"></div>
<span class="t" style="left:10.20px;top:267.50px;font-size:14.3px;line-height:14.3px;color:#111f7a;letter-spacing:0.31px">Export results for</span>
<span class="t" style="left:10.20px;top:287.50px;font-size:14.3px;line-height:14.3px;color:#111f7a;letter-spacing:0.31px">variety pair</span>
<span class="t" style="left:188.00px;top:93.38px;font-size:24px;line-height:24px;color:#111f7a;letter-spacing:0.33px">Variety pair details</span>
<div class="dd" style="left:396px;top:87px;width:111px;border-color:#ff8c00"><div class="ddin"><div class="focus"></div></div></div>
<div class="dd" style="left:513px;top:87px;width:110px;border-color:#9932cc"><div class="ddin"></div></div>
<span class="t" style="left:407.60px;top:99.89px;font-size:19.5px;line-height:19.5px;color:#000;letter-spacing:0.0px">Zaramo</span>
<span class="t" style="left:524.30px;top:99.89px;font-size:19.5px;line-height:19.5px;color:#000;letter-spacing:-0.45px">Swahili</span>
<svg class="abs" style="left:0;top:0" width="1918" height="990"><polyline points="488.0,104.6 491.5,108.6 495.0,104.6" fill="none" stroke="#444" stroke-width="1.3"/></svg>
<svg class="abs" style="left:0;top:0" width="1918" height="990"><polyline points="604.1,104.6 607.6,108.6 611.1,104.6" fill="none" stroke="#444" stroke-width="1.3"/></svg>
<span class="t" style="left:188.00px;top:144.85px;font-size:14px;line-height:14px;color:#111f7a;font-weight:bold;letter-spacing:0.4px">Similarity</span><div class="secul" style="left:188px;top:161px;width:1715px"></div>
<span class="t" style="left:188.00px;top:256.95px;font-size:14px;line-height:14px;color:#111f7a;font-weight:bold;letter-spacing:0.23px">Likely cognates<span style="font-weight:normal;color:#8a8a8a;letter-spacing:0.2px;margin-left:5px">(39)</span></span><div class="secul" style="left:188px;top:273px;width:851px"></div>
<span class="t" style="left:188.00px;top:620.95px;font-size:14px;line-height:14px;color:#111f7a;font-weight:bold;letter-spacing:0.31px">Likely non-cognates<span style="font-weight:normal;color:#8a8a8a;letter-spacing:0.2px;margin-left:5px">(118)</span></span><div class="secul" style="left:188px;top:637px;width:851px"></div>
<span class="t" style="left:1052.00px;top:256.95px;font-size:14px;line-height:14px;color:#111f7a;font-weight:bold;letter-spacing:0.15px">Sound changes</span><div class="secul" style="left:1052px;top:273px;width:851px"></div>
<span class="t" style="left:194.50px;top:179.71px;font-size:17px;line-height:17px;color:#111f7a;letter-spacing:-0.35px">Lexical:</span>
<span class="t" style="left:278.00px;top:179.71px;font-size:17px;line-height:17px;color:#000;letter-spacing:-0.3px">24.84%</span>
<span class="t" style="left:194.50px;top:214.41px;font-size:17px;line-height:17px;color:#111f7a;letter-spacing:0.07px">Phonetic:</span>
<span class="t" style="left:278.00px;top:214.41px;font-size:17px;line-height:17px;color:#000;letter-spacing:-0.3px">54.34%</span>
<div class="lb" style="top:280px;height:322px">
<div class="lbclip" style="height:321px">
<div class="alt" style="top:176px"></div>
</div>
</div>
<div class="lbtxt" style="top:281px;height:320px"><div style="position:absolute;left:0;top:-281px">
<span class="t" style="left:201.00px;top:296.11px;font-size:17px;line-height:17px;color:#111f7a;letter-spacing:0.1px">hand</span>
<span class="c" style="left:180.40px;top:324.73px;font-size:20.4px;line-height:20.4px;color:#8a93b5;">|</span>
<span class="c" style="left:198.40px;top:326.05px;font-size:20.5px;line-height:20.5px;color:#ff8c00;">m</span>
<span class="c" style="left:220.50px;top:326.05px;font-size:20.5px;line-height:20.5px;color:#ff8c00;">k</span>
<span class="c" style="left:238.90px;top:326.05px;font-size:20.5px;line-height:20.5px;color:#ff8c00;">o</span>
<span class="c" style="left:258.30px;top:326.05px;font-size:20.5px;line-height:20.5px;color:#ff8c00;">n</span>
<span class="c" style="left:276.90px;top:326.05px;font-size:20.5px;line-height:20.5px;color:#ff8c00;">o</span>
<span class="c" style="left:293.00px;top:324.73px;font-size:20.4px;line-height:20.4px;color:#8a93b5;">|</span>
<span class="c" style="left:180.40px;top:359.53px;font-size:20.4px;line-height:20.4px;color:#8a93b5;">|</span>
<span class="c" style="left:198.40px;top:360.85px;font-size:20.5px;line-height:20.5px;color:#9932cc;">m</span>
<span class="c" style="left:220.50px;top:360.85px;font-size:20.5px;line-height:20.5px;color:#9932cc;">k</span>
<span class="c" style="left:238.90px;top:360.85px;font-size:20.5px;line-height:20.5px;color:#9932cc;">o</span>
<span class="c" style="left:258.30px;top:360.85px;font-size:20.5px;line-height:20.5px;color:#9932cc;">n</span>
<span class="c" style="left:276.90px;top:360.85px;font-size:20.5px;line-height:20.5px;color:#9932cc;">o</span>
<span class="c" style="left:293.00px;top:359.53px;font-size:20.4px;line-height:20.4px;color:#8a93b5;">|</span>
<span class="c" style="left:196.00px;top:395.82px;font-size:19px;line-height:19px;color:#000;">1</span>
<span class="c" style="left:220.50px;top:395.82px;font-size:19px;line-height:19px;color:#000;">1</span>
<span class="c" style="left:238.90px;top:395.82px;font-size:19px;line-height:19px;color:#000;">1</span>
<span class="c" style="left:258.30px;top:395.82px;font-size:19px;line-height:19px;color:#000;">1</span>
<span class="c" style="left:276.90px;top:395.82px;font-size:19px;line-height:19px;color:#000;">1</span>
<span class="t" style="left:204.50px;top:425.05px;font-size:14px;line-height:14px;color:#000;letter-spacing:0.17px">Similarity: 100.00%</span>
<span class="t" style="left:201.00px;top:465.11px;font-size:17px;line-height:17px;color:#111f7a;letter-spacing:0.1px">warm</span>
<span class="c" style="left:180.40px;top:493.73px;font-size:20.4px;line-height:20.4px;color:#8a93b5;">|</span>
<span class="c" style="left:198.40px;top:495.05px;font-size:20.5px;line-height:20.5px;color:#ff8c00;">m</span>
<span class="c" style="left:220.70px;top:495.05px;font-size:20.5px;line-height:20.5px;color:#ff8c00;">o</span>
<span class="c" style="left:237.40px;top:495.05px;font-size:20.5px;line-height:20.5px;color:#ff8c00;">t</span>
<span class="c" style="left:258.70px;top:495.05px;font-size:20.5px;line-height:20.5px;color:#ff8c00;">o</span>
<span class="c" style="left:274.80px;top:493.73px;font-size:20.4px;line-height:20.4px;color:#8a93b5;">|</span>
<span class="c" style="left:180.40px;top:528.53px;font-size:20.4px;line-height:20.4px;color:#8a93b5;">|</span>
<span class="c" style="left:198.40px;top:529.85px;font-size:20.5px;line-height:20.5px;color:#9932cc;">m</span>
<span class="c" style="left:220.70px;top:529.85px;font-size:20.5px;line-height:20.5px;color:#9932cc;">o</span>
<span class="c" style="left:237.40px;top:529.85px;font-size:20.5px;line-height:20.5px;color:#9932cc;">t</span>
<span class="c" style="left:258.70px;top:529.85px;font-size:20.5px;line-height:20.5px;color:#9932cc;">o</span>
<span class="c" style="left:274.80px;top:528.53px;font-size:20.4px;line-height:20.4px;color:#8a93b5;">|</span>
<span class="c" style="left:196.00px;top:564.82px;font-size:19px;line-height:19px;color:#000;">1</span>
<span class="c" style="left:220.70px;top:564.82px;font-size:19px;line-height:19px;color:#000;">1</span>
<span class="c" style="left:239.00px;top:564.82px;font-size:19px;line-height:19px;color:#000;">1</span>
<span class="c" style="left:258.70px;top:564.82px;font-size:19px;line-height:19px;color:#000;">1</span>
<span class="t" style="left:204.50px;top:594.05px;font-size:14px;line-height:14px;color:#000;letter-spacing:0.17px">Similarity: 100.00%</span>
</div></div>
<div class="sb" style="left:993px;top:283px;width:21px;height:319px"></div>
<div class="sbthumb" style="left:993px;top:304px;width:21px;height:10px"></div>
<svg class="abs" style="left:0;top:0" width="1918" height="990"><polyline points="1000.0,296.09999999999997 1004,290.7 1008.0,296.09999999999997" fill="none" stroke="#7a7f7a" stroke-width="1.5"/></svg>
<svg class="abs" style="left:0;top:0" width="1918" height="990"><polyline points="1000.0,589.0 1004,594.4000000000001 1008.0,589.0" fill="none" stroke="#7a7f7a" stroke-width="1.5"/></svg>
<div class="lb" style="top:644px;height:335px">
<div class="lbclip" style="height:332px">
<div class="alt" style="top:176.5px"></div>
</div>
</div>
<div class="lbtxt" style="top:645px;height:333px"><div style="position:absolute;left:0;top:-645px">
<span class="t" style="left:201.00px;top:660.51px;font-size:17px;line-height:17px;color:#111f7a;letter-spacing:0.1px">heart</span>
<span class="c" style="left:180.40px;top:689.13px;font-size:20.4px;line-height:20.4px;color:#8a93b5;">|</span>
<span class="c" style="left:194.50px;top:690.45px;font-size:20.5px;line-height:20.5px;color:#ff8c00;">z</span>
<span class="c" style="left:220.50px;top:690.45px;font-size:20.5px;line-height:20.5px;color:#ff8c00;">o</span>
<span class="c" style="left:238.00px;top:690.45px;font-size:20.5px;line-height:20.5px;color:#ff8c00;">y</span>
<span class="c" style="left:250.50px;top:690.45px;font-size:20.5px;line-height:20.5px;color:#ff8c00;">o</span>
<span class="c" style="left:266.00px;top:689.13px;font-size:20.4px;line-height:20.4px;color:#8a93b5;">|</span>
<span class="c" style="left:180.40px;top:723.93px;font-size:20.4px;line-height:20.4px;color:#8a93b5;">|</span>
<span class="c" style="left:198.40px;top:725.25px;font-size:20.5px;line-height:20.5px;color:#9932cc;">m</span>
<span class="c" style="left:220.50px;top:725.25px;font-size:20.5px;line-height:20.5px;color:#9932cc;">o</span>
<span class="c" style="left:238.00px;top:725.25px;font-size:20.5px;line-height:20.5px;color:#9932cc;">y</span>
<span class="c" style="left:250.50px;top:725.25px;font-size:20.5px;line-height:20.5px;color:#9932cc;">o</span>
<span class="c" style="left:266.00px;top:723.93px;font-size:20.4px;line-height:20.4px;color:#8a93b5;">|</span>
<span class="c" style="left:196.00px;top:760.22px;font-size:19px;line-height:19px;color:#000;">3</span>
<span class="c" style="left:220.50px;top:760.22px;font-size:19px;line-height:19px;color:#000;">1</span>
<span class="c" style="left:239.00px;top:760.22px;font-size:19px;line-height:19px;color:#000;">1</span>
<span class="t" style="left:204.50px;top:789.45px;font-size:14px;line-height:14px;color:#000;letter-spacing:0.17px">Similarity: 78.18%</span>
<span class="t" style="left:201.00px;top:829.01px;font-size:17px;line-height:17px;color:#111f7a;letter-spacing:0.1px">few</span>
<span class="c" style="left:180.40px;top:857.63px;font-size:20.4px;line-height:20.4px;color:#8a93b5;">|</span>
<span class="c" style="left:195.00px;top:858.95px;font-size:20.5px;line-height:20.5px;color:#ff8c00;">v</span>
<span class="c" style="left:211.00px;top:858.95px;font-size:20.5px;line-height:20.5px;color:#ff8c00;">i</span>
<span class="c" style="left:233.00px;top:858.95px;font-size:20.5px;line-height:20.5px;color:#ff8c00;">d</span>
<span class="c" style="left:251.80px;top:858.95px;font-size:20.5px;line-height:20.5px;color:#ff8c00;">o</span>
<span class="c" style="left:272.00px;top:858.95px;font-size:20.5px;line-height:20.5px;color:#ff8c00;">d</span>
<span class="c" style="left:291.50px;top:858.95px;font-size:20.5px;line-height:20.5px;color:#ff8c00;">o</span>
<span class="c" style="left:307.00px;top:857.63px;font-size:20.4px;line-height:20.4px;color:#8a93b5;">|</span>
<span class="c" style="left:180.40px;top:892.43px;font-size:20.4px;line-height:20.4px;color:#8a93b5;">|</span>
<span class="c" style="left:195.00px;top:893.75px;font-size:20.5px;line-height:20.5px;color:#9932cc;">k</span>
<span class="c" style="left:211.00px;top:893.75px;font-size:20.5px;line-height:20.5px;color:#9932cc;">i</span>
<span class="c" style="left:233.00px;top:893.75px;font-size:20.5px;line-height:20.5px;color:#9932cc;">d</span>
<span class="c" style="left:251.80px;top:893.75px;font-size:20.5px;line-height:20.5px;color:#9932cc;">o</span>
<span class="c" style="left:272.00px;top:893.75px;font-size:20.5px;line-height:20.5px;color:#9932cc;">g</span>
<span class="c" style="left:291.50px;top:893.75px;font-size:20.5px;line-height:20.5px;color:#9932cc;">o</span>
<span class="c" style="left:307.00px;top:892.43px;font-size:20.4px;line-height:20.4px;color:#8a93b5;">|</span>
<span class="c" style="left:196.00px;top:928.72px;font-size:19px;line-height:19px;color:#000;">3</span>
<span class="c" style="left:214.60px;top:928.72px;font-size:19px;line-height:19px;color:#000;">1</span>
<span class="c" style="left:233.00px;top:928.72px;font-size:19px;line-height:19px;color:#000;">1</span>
<span class="c" style="left:251.40px;top:928.72px;font-size:19px;line-height:19px;color:#000;">1</span>
<span class="c" style="left:271.00px;top:928.72px;font-size:19px;line-height:19px;color:#000;">3</span>
<span class="c" style="left:291.50px;top:928.72px;font-size:19px;line-height:19px;color:#000;">1</span>
<span class="t" style="left:204.50px;top:957.95px;font-size:14px;line-height:14px;color:#000;letter-spacing:0.17px">Similarity: 78.09%</span>
</div></div>
<div class="sb" style="left:993px;top:647px;width:21px;height:332px"></div>
<div class="sbthumb" style="left:993px;top:668px;width:21px;height:10px"></div>
<svg class="abs" style="left:0;top:0" width="1918" height="990"><polyline points="1000.0,660.1 1004,654.6999999999999 1008.0,660.1" fill="none" stroke="#7a7f7a" stroke-width="1.5"/></svg>
<svg class="abs" style="left:0;top:0" width="1918" height="990"><polyline points="1000.0,966.0 1004,971.4000000000001 1008.0,966.0" fill="none" stroke="#7a7f7a" stroke-width="1.5"/></svg>
<div class="tb"></div>
<div class="th"></div>
<div class="abs" style="left:1152px;top:281px;width:1px;height:26px;background:#9db9e6"></div>
<div class="abs" style="left:1321px;top:281px;width:1px;height:26px;background:#9db9e6"></div>
<span class="t" style="left:1063.00px;top:287.05px;font-size:15.3px;line-height:15.3px;color:#111f7a;letter-spacing:-0.5px">Segment</span>
<span class="t" style="left:1163.00px;top:287.05px;font-size:15.3px;line-height:15.3px;color:#111f7a;letter-spacing:-0.07px">Probability</span>
<span class="t" style="left:1332.00px;top:287.05px;font-size:15.3px;line-height:15.3px;color:#111f7a;letter-spacing:-0.5px">Frequency</span>
<svg class="abs" style="left:1297px;top:293px" width="15" height="11"><path d="M1.2,1.5 L13,1.5 L7.1,9.6 Z" fill="#777" stroke="#111" stroke-width="1.4" stroke-linejoin="round"/></svg>
<div class="tbclip"><div style="position:absolute;left:-1053px;top:-281px;width:1918px;height:990px">
<div class="abs" style="left:1053px;top:308px;width:828px;height:34px;background:#e5f1fb"></div>
<span class="t" style="left:1058.50px;top:316.89px;font-size:19.5px;line-height:19.5px;color:#111f7a;letter-spacing:0.1px"><span style="color:#ff8c00">-</span> <span class="arr">→</span> <span class="qm">?</span></span>
<div class="abs" style="left:1053px;top:342px;width:828px;height:33px;background:#fff"></div>
<div class="abs" style="left:1053px;top:341px;width:828px;height:1px;background:#cfcfcf"></div>
<div class="abs" style="left:1053px;top:375px;width:828px;height:1px;background:#cfcfcf"></div>
<div class="abs" style="left:1152px;top:342px;width:1px;height:33px;background:#d4d4d4"></div>
<div class="abs" style="left:1321px;top:342px;width:1px;height:33px;background:#d4d4d4"></div>
<div class="abs" style="left:1880px;top:342px;width:1px;height:33px;background:#d4d4d4"></div>
<span class="t" style="left:1061.00px;top:351.57px;font-size:20px;line-height:20px;color:#9932cc;">y</span>
<div class="abs" style="left:1157px;top:346px;width:25px;height:25px;background:#11227f"></div>
<span class="t" style="left:1184.50px;top:350.15px;font-size:14px;line-height:14px;color:#000;letter-spacing:0.05px">25.00%</span>
<span class="t" style="left:1326.00px;top:348.65px;font-size:14px;line-height:14px;color:#000;">1</span>
<div class="abs" style="left:1053px;top:376px;width:828px;height:33px;background:#f6fafd"></div>
<div class="abs" style="left:1053px;top:375px;width:828px;height:1px;background:#cfcfcf"></div>
<div class="abs" style="left:1053px;top:409px;width:828px;height:1px;background:#cfcfcf"></div>
<div class="abs" style="left:1152px;top:376px;width:1px;height:33px;background:#d4d4d4"></div>
<div class="abs" style="left:1321px;top:376px;width:1px;height:33px;background:#d4d4d4"></div>
<div class="abs" style="left:1880px;top:376px;width:1px;height:33px;background:#d4d4d4"></div>
<span class="t" style="left:1061.00px;top:385.57px;font-size:20px;line-height:20px;color:#9932cc;">m</span>
<div class="abs" style="left:1157px;top:380px;width:25px;height:25px;background:#11227f"></div>
<span class="t" style="left:1184.50px;top:384.15px;font-size:14px;line-height:14px;color:#000;letter-spacing:0.05px">25.00%</span>
<span class="t" style="left:1326.00px;top:382.65px;font-size:14px;line-height:14px;color:#000;">1</span>
<div class="abs" style="left:1053px;top:410px;width:828px;height:35px;background:#e5f1fb"></div>
<span class="t" style="left:1058.50px;top:418.89px;font-size:19.5px;line-height:19.5px;color:#111f7a;letter-spacing:0.1px"><span style="color:#ff8c00">a</span> <span class="arr">→</span> <span class="qm">?</span></span>
<div class="abs" style="left:1053px;top:445px;width:828px;height:33px;background:#fff"></div>
<div class="abs" style="left:1053px;top:444px;width:828px;height:1px;background:#cfcfcf"></div>
<div class="abs" style="left:1053px;top:478px;width:828px;height:1px;background:#cfcfcf"></div>
<div class="abs" style="left:1152px;top:445px;width:1px;height:33px;background:#d4d4d4"></div>
<div class="abs" style="left:1321px;top:445px;width:1px;height:33px;background:#d4d4d4"></div>
<div class="abs" style="left:1880px;top:445px;width:1px;height:33px;background:#d4d4d4"></div>
<span class="t" style="left:1061.00px;top:454.57px;font-size:20px;line-height:20px;color:#9932cc;">a</span>
<div class="abs" style="left:1157px;top:449px;width:86px;height:25px;background:#11227f"></div>
<span class="t" style="left:1245.50px;top:453.15px;font-size:14px;line-height:14px;color:#000;letter-spacing:0.05px">86.36%</span>
<span class="t" style="left:1326.00px;top:451.65px;font-size:14px;line-height:14px;color:#000;">19</span>
<div class="abs" style="left:1053px;top:479px;width:828px;height:33px;background:#f6fafd"></div>
<div class="abs" style="left:1053px;top:478px;width:828px;height:1px;background:#cfcfcf"></div>
<div class="abs" style="left:1053px;top:512px;width:828px;height:1px;background:#cfcfcf"></div>
<div class="abs" style="left:1152px;top:479px;width:1px;height:33px;background:#d4d4d4"></div>
<div class="abs" style="left:1321px;top:479px;width:1px;height:33px;background:#d4d4d4"></div>
<div class="abs" style="left:1880px;top:479px;width:1px;height:33px;background:#d4d4d4"></div>
<span class="t" style="left:1061.00px;top:488.57px;font-size:20px;line-height:20px;color:#9932cc;">i</span>
<div class="abs" style="left:1157px;top:483px;width:5px;height:25px;background:#11227f"></div>
<span class="t" style="left:1164.50px;top:487.15px;font-size:14px;line-height:14px;color:#000;letter-spacing:0.05px">4.55%</span>
<span class="t" style="left:1326.00px;top:485.65px;font-size:14px;line-height:14px;color:#000;">1</span>
<div class="abs" style="left:1053px;top:513px;width:828px;height:34px;background:#e5f1fb"></div>
<span class="t" style="left:1058.50px;top:521.89px;font-size:19.5px;line-height:19.5px;color:#111f7a;letter-spacing:0.1px"><span style="color:#ff8c00">b</span> <span class="arr">→</span> <span class="qm">?</span></span>
<div class="abs" style="left:1053px;top:547px;width:828px;height:34px;background:#fff"></div>
<div class="abs" style="left:1053px;top:546px;width:828px;height:1px;background:#cfcfcf"></div>
<div class="abs" style="left:1053px;top:581px;width:828px;height:1px;background:#cfcfcf"></div>
<div class="abs" style="left:1152px;top:547px;width:1px;height:34px;background:#d4d4d4"></div>
<div class="abs" style="left:1321px;top:547px;width:1px;height:34px;background:#d4d4d4"></div>
<div class="abs" style="left:1880px;top:547px;width:1px;height:34px;background:#d4d4d4"></div>
<span class="t" style="left:1061.00px;top:556.57px;font-size:20px;line-height:20px;color:#9932cc;">b</span>
<div class="abs" style="left:1157px;top:551px;width:50px;height:25px;background:#11227f"></div>
<span class="t" style="left:1209.50px;top:555.15px;font-size:14px;line-height:14px;color:#000;letter-spacing:0.05px">50.00%</span>
<span class="t" style="left:1326.00px;top:553.65px;font-size:14px;line-height:14px;color:#000;">3</span>
<div class="abs" style="left:1053px;top:582px;width:828px;height:33px;background:#f6fafd"></div>
<div class="abs" style="left:1053px;top:581px;width:828px;height:1px;background:#cfcfcf"></div>
<div class="abs" style="left:1053px;top:615px;width:828px;height:1px;background:#cfcfcf"></div>
<div class="abs" style="left:1152px;top:582px;width:1px;height:33px;background:#d4d4d4"></div>
<div class="abs" style="left:1321px;top:582px;width:1px;height:33px;background:#d4d4d4"></div>
<div class="abs" style="left:1880px;top:582px;width:1px;height:33px;background:#d4d4d4"></div>
<span class="t" style="left:1061.00px;top:591.57px;font-size:20px;line-height:20px;color:#9932cc;">p</span>
<div class="abs" style="left:1157px;top:586px;width:17px;height:25px;background:#11227f"></div>
<span class="t" style="left:1176.50px;top:590.15px;font-size:14px;line-height:14px;color:#000;letter-spacing:0.05px">16.67%</span>
<span class="t" style="left:1326.00px;top:588.65px;font-size:14px;line-height:14px;color:#000;">1</span>
<div class="abs" style="left:1053px;top:616px;width:828px;height:34px;background:#e5f1fb"></div>
<span class="t" style="left:1058.50px;top:624.89px;font-size:19.5px;line-height:19.5px;color:#111f7a;letter-spacing:0.1px"><span style="color:#ff8c00">bw</span> <span class="arr">→</span> <span class="qm">?</span></span>
<div class="abs" style="left:1053px;top:650px;width:828px;height:33px;background:#fff"></div>
<div class="abs" style="left:1053px;top:649px;width:828px;height:1px;background:#cfcfcf"></div>
<div class="abs" style="left:1053px;top:683px;width:828px;height:1px;background:#cfcfcf"></div>
<div class="abs" style="left:1152px;top:650px;width:1px;height:33px;background:#d4d4d4"></div>
<div class="abs" style="left:1321px;top:650px;width:1px;height:33px;background:#d4d4d4"></div>
<div class="abs" style="left:1880px;top:650px;width:1px;height:33px;background:#d4d4d4"></div>
<span class="t" style="left:1061.00px;top:659.57px;font-size:20px;line-height:20px;color:#9932cc;">z</span>
<div class="abs" style="left:1157px;top:654px;width:50px;height:25px;background:#11227f"></div>
<span class="t" style="left:1209.50px;top:658.15px;font-size:14px;line-height:14px;color:#000;letter-spacing:0.05px">50.00%</span>
<span class="t" style="left:1326.00px;top:656.65px;font-size:14px;line-height:14px;color:#000;">1</span>
<div class="abs" style="left:1053px;top:684px;width:828px;height:35px;background:#e5f1fb"></div>
<span class="t" style="left:1058.50px;top:692.89px;font-size:19.5px;line-height:19.5px;color:#111f7a;letter-spacing:0.1px"><span style="color:#ff8c00">ch</span> <span class="arr">→</span> <span class="qm">?</span></span>
<div class="abs" style="left:1053px;top:719px;width:828px;height:33px;background:#f6fafd"></div>
<div class="abs" style="left:1053px;top:718px;width:828px;height:1px;background:#cfcfcf"></div>
<div class="abs" style="left:1053px;top:752px;width:828px;height:1px;background:#cfcfcf"></div>
<div class="abs" style="left:1152px;top:719px;width:1px;height:33px;background:#d4d4d4"></div>
<div class="abs" style="left:1321px;top:719px;width:1px;height:33px;background:#d4d4d4"></div>
<div class="abs" style="left:1880px;top:719px;width:1px;height:33px;background:#d4d4d4"></div>
<span class="t" style="left:1061.00px;top:728.57px;font-size:20px;line-height:20px;color:#9932cc;">n</span>
<div class="abs" style="left:1157px;top:723px;width:50px;height:25px;background:#11227f"></div>
<span class="t" style="left:1209.50px;top:727.15px;font-size:14px;line-height:14px;color:#000;letter-spacing:0.05px">50.00%</span>
<span class="t" style="left:1326.00px;top:725.65px;font-size:14px;line-height:14px;color:#000;">1</span>
<div class="abs" style="left:1053px;top:753px;width:828px;height:34px;background:#e5f1fb"></div>
<span class="t" style="left:1058.50px;top:761.89px;font-size:19.5px;line-height:19.5px;color:#111f7a;letter-spacing:0.1px"><span style="color:#ff8c00">d</span> <span class="arr">→</span> <span class="qm">?</span></span>
<div class="abs" style="left:1053px;top:787px;width:828px;height:33px;background:#fff"></div>
<div class="abs" style="left:1053px;top:786px;width:828px;height:1px;background:#cfcfcf"></div>
<div class="abs" style="left:1053px;top:820px;width:828px;height:1px;background:#cfcfcf"></div>
<div class="abs" style="left:1152px;top:787px;width:1px;height:33px;background:#d4d4d4"></div>
<div class="abs" style="left:1321px;top:787px;width:1px;height:33px;background:#d4d4d4"></div>
<div class="abs" style="left:1880px;top:787px;width:1px;height:33px;background:#d4d4d4"></div>
<span class="t" style="left:1061.00px;top:796.57px;font-size:20px;line-height:20px;color:#9932cc;">d</span>
<div class="abs" style="left:1157px;top:791px;width:40px;height:25px;background:#11227f"></div>
<span class="t" style="left:1199.50px;top:795.15px;font-size:14px;line-height:14px;color:#000;letter-spacing:0.05px">40.00%</span>
<span class="t" style="left:1326.00px;top:793.65px;font-size:14px;line-height:14px;color:#000;">2</span>
<div class="abs" style="left:1053px;top:821px;width:828px;height:34px;background:#f6fafd"></div>
<div class="abs" style="left:1053px;top:820px;width:828px;height:1px;background:#cfcfcf"></div>
<div class="abs" style="left:1053px;top:855px;width:828px;height:1px;background:#cfcfcf"></div>
<div class="abs" style="left:1152px;top:821px;width:1px;height:34px;background:#d4d4d4"></div>
<div class="abs" style="left:1321px;top:821px;width:1px;height:34px;background:#d4d4d4"></div>
<div class="abs" style="left:1880px;top:821px;width:1px;height:34px;background:#d4d4d4"></div>
<span class="t" style="left:1061.00px;top:830.57px;font-size:20px;line-height:20px;color:#9932cc;">t</span>
<div class="abs" style="left:1157px;top:825px;width:20px;height:25px;background:#11227f"></div>
<span class="t" style="left:1179.50px;top:829.15px;font-size:14px;line-height:14px;color:#000;letter-spacing:0.05px">20.00%</span>
<span class="t" style="left:1326.00px;top:827.65px;font-size:14px;line-height:14px;color:#000;">1</span>
<div class="abs" style="left:1053px;top:856px;width:828px;height:34px;background:#e5f1fb"></div>
<span class="t" style="left:1058.50px;top:864.89px;font-size:19.5px;line-height:19.5px;color:#111f7a;letter-spacing:0.1px"><span style="color:#ff8c00">e</span> <span class="arr">→</span> <span class="qm">?</span></span>
<div class="abs" style="left:1053px;top:890px;width:828px;height:33px;background:#fff"></div>
<div class="abs" style="left:1053px;top:889px;width:828px;height:1px;background:#cfcfcf"></div>
<div class="abs" style="left:1053px;top:923px;width:828px;height:1px;background:#cfcfcf"></div>
<div class="abs" style="left:1152px;top:890px;width:1px;height:33px;background:#d4d4d4"></div>
<div class="abs" style="left:1321px;top:890px;width:1px;height:33px;background:#d4d4d4"></div>
<div class="abs" style="left:1880px;top:890px;width:1px;height:33px;background:#d4d4d4"></div>
<span class="t" style="left:1061.00px;top:899.57px;font-size:20px;line-height:20px;color:#9932cc;">e</span>
<div class="abs" style="left:1157px;top:894px;width:89px;height:25px;background:#11227f"></div>
<span class="t" style="left:1248.50px;top:898.15px;font-size:14px;line-height:14px;color:#000;letter-spacing:0.05px">88.89%</span>
<span class="t" style="left:1326.00px;top:896.65px;font-size:14px;line-height:14px;color:#000;">8</span>
<div class="abs" style="left:1053px;top:924px;width:828px;height:34px;background:#e5f1fb"></div>
<span class="t" style="left:1058.50px;top:932.89px;font-size:19.5px;line-height:19.5px;color:#111f7a;letter-spacing:0.1px"><span style="color:#ff8c00">f</span> <span class="arr">→</span> <span class="qm">?</span></span>
<div class="abs" style="left:1053px;top:958px;width:828px;height:34px;background:#f6fafd"></div>
<div class="abs" style="left:1053px;top:957px;width:828px;height:1px;background:#cfcfcf"></div>
<div class="abs" style="left:1053px;top:992px;width:828px;height:1px;background:#cfcfcf"></div>
<div class="abs" style="left:1152px;top:958px;width:1px;height:34px;background:#d4d4d4"></div>
<div class="abs" style="left:1321px;top:958px;width:1px;height:34px;background:#d4d4d4"></div>
<div class="abs" style="left:1880px;top:958px;width:1px;height:34px;background:#d4d4d4"></div>
<span class="t" style="left:1061.00px;top:967.57px;font-size:20px;line-height:20px;color:#9932cc;">f</span>
<div class="abs" style="left:1157px;top:962px;width:50px;height:25px;background:#11227f"></div>
<span class="t" style="left:1209.50px;top:966.15px;font-size:14px;line-height:14px;color:#000;letter-spacing:0.05px">50.00%</span>
<span class="t" style="left:1326.00px;top:964.65px;font-size:14px;line-height:14px;color:#000;">1</span>
</div></div>
<div class="abs" style="left:1053px;top:307px;width:828px;height:1px;background:#d3e0f1"></div>
<div class="sb" style="left:1881px;top:281px;width:21px;height:699px"></div>
<div class="sbthumb" style="left:1881px;top:303px;width:21px;height:166px"></div>
<svg class="abs" style="left:0;top:0" width="1918" height="990"><polyline points="1887.5,295.3 1891.5,289.90000000000003 1895.5,295.3" fill="none" stroke="#7a7f7a" stroke-width="1.5"/></svg></div></div>
<svg class="abs" style="left:20px;top:245px" width="24" height="26" viewBox="0 0 24 26">
 <path fill="#bf5b0c" d="M3,5 Q3.4,3 5,2.9 L11.6,3 Q16,4.5 18,9.5 Q18.8,14 14,17.6 L12.4,16.4 Q15.6,13.5 15.4,9.8 Q14.8,6.6 12,5 L9.5,6.5 L3.6,6.8 Z"/>
 <path d="M4.2,7.4 L8.3,15.8" stroke="#bf5b0c" stroke-width="1.3" stroke-dasharray="1.6 0.7" fill="none"/>
 <path d="M9.3,6.5 L10.9,5.5 L10.9,16 L9.6,16 Z" fill="#fafafa"/>
 <path d="M10.9,5 L11.8,5 L13.8,10.5 L12,16 L10.9,16 Z" fill="#c6c6c6"/>
 <path d="M6.6,16.8 L9.3,15.8" stroke="#0b4ec0" stroke-width="1.8"/>
 <path d="M10.9,16 L11.6,18.4" stroke="#2a8ff0" stroke-width="1.8"/>
 <circle cx="4.9" cy="18" r="2.0" fill="none" stroke="#0b4ec0" stroke-width="1.7"/>
 <circle cx="11.9" cy="20.4" r="2.0" fill="none" stroke="#2a8ff0" stroke-width="1.7"/>
</svg>
<span class="t" style="left:50px;top:249.66px;font-size:16px;line-height:16px;color:#1f1f1f;letter-spacing:-0.5px">Snip &amp; Sketch</span>
<svg class="abs" style="left:412px;top:250px" width="14" height="14"><path d="M1,1 L13,13 M13,1 L1,13" stroke="#444" stroke-width="1.1" fill="none"/></svg>
<span class="t" style="left:20.5px;top:291.89px;font-size:17.5px;line-height:17.5px;color:#111;font-weight:bold;letter-spacing:0.1px">Snip saved to clipboard</span>
<span class="t" style="left:20.5px;top:316.56px;font-size:18px;line-height:18px;color:#666;letter-spacing:0.2px">Select here to mark up and share the image</span>
</div>
</body></html>
